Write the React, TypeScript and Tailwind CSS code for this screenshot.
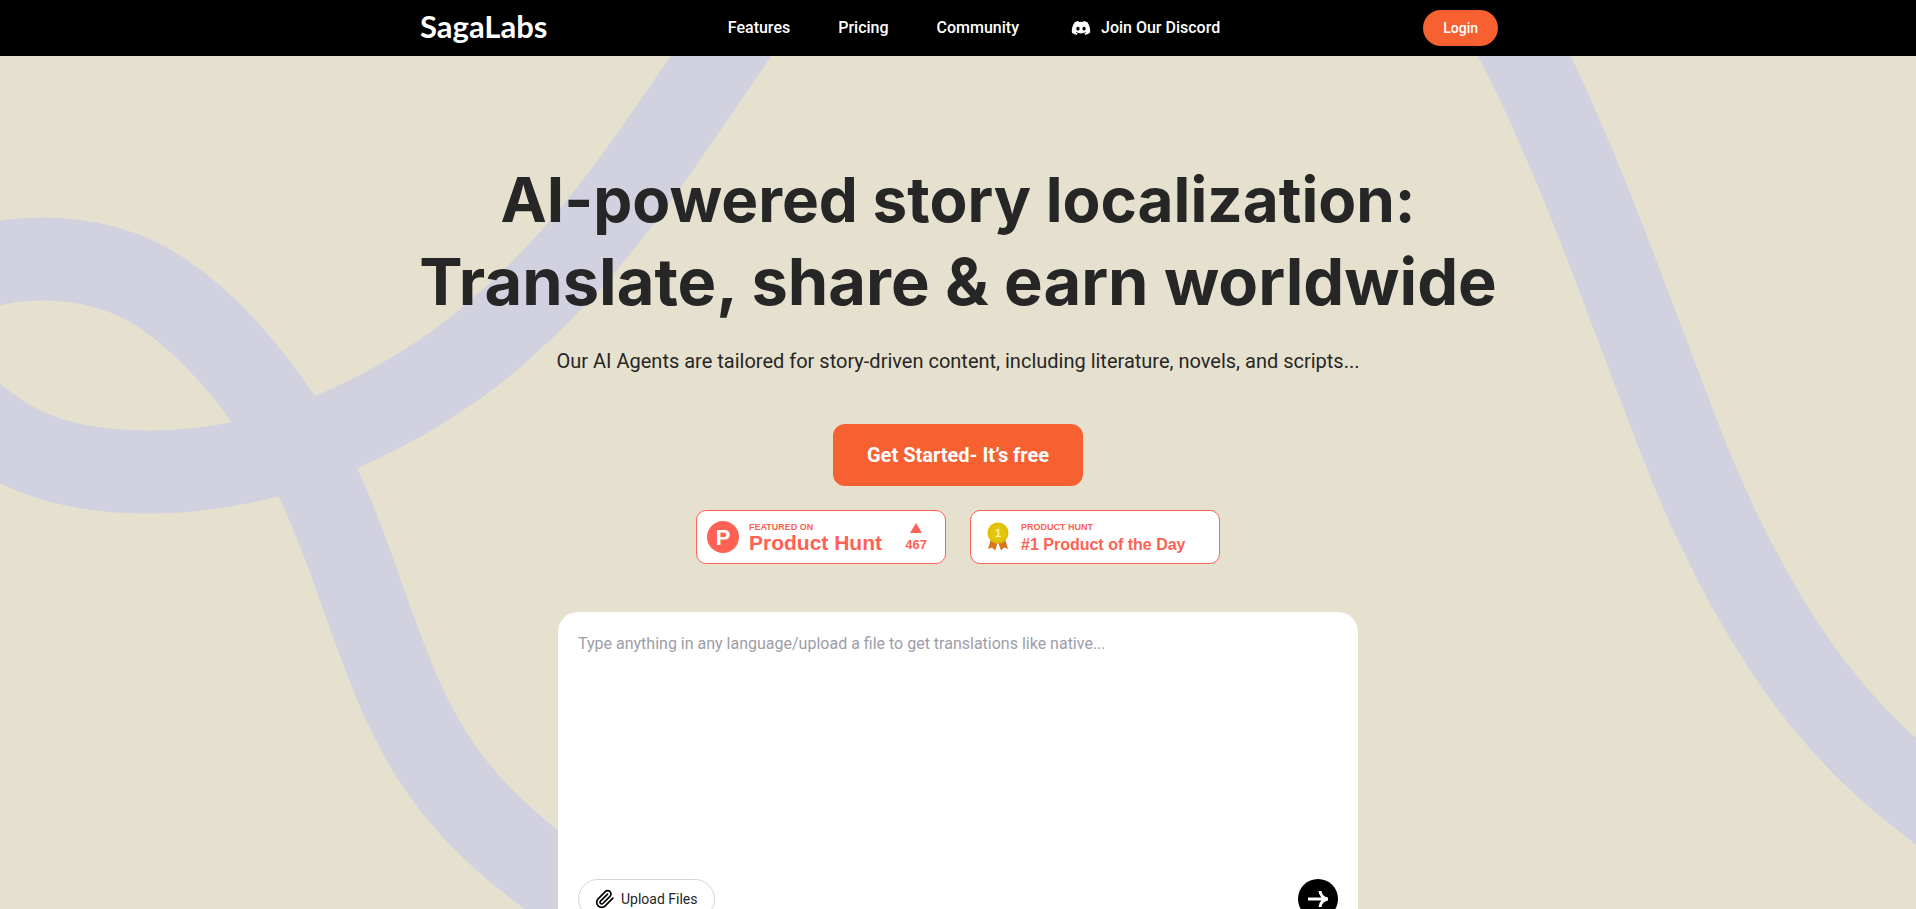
import React, { useState } from "react";
import { FaDiscord } from "react-icons/fa";

interface NavLink {
  label: string;
  href: string;
}

const navLinks: NavLink[] = [
  { label: "Features", href: "#features" },
  { label: "Pricing", href: "#pricing" },
  { label: "Community", href: "#community" },
];

const Header: React.FC = () => {
  return (
    <header className="relative bg-black text-white">
      <div className="mx-auto grid h-14 max-w-[1080px] grid-cols-[1fr_auto_1fr] items-center">
        <a
          href="#home"
          className="pb-1 pl-0.5 font-['Lato',sans-serif] text-[31px] leading-8 font-bold"
        >
          SagaLabs
        </a>
        <nav className="flex items-center gap-12 pl-8 font-medium">
          {navLinks.map((link) => (
            <a key={link.label} href={link.href}>
              {link.label}
            </a>
          ))}
          <a href="#discord" className="flex items-center gap-2.5 pl-1">
            <FaDiscord className="h-5 w-5" />
            Join Our Discord
          </a>
        </nav>
        <button
          type="button"
          className="h-9 justify-self-end rounded-full bg-[#f76030] px-5 text-sm font-medium"
        >
          Login
        </button>
      </div>
    </header>
  );
};

const Ribbons: React.FC = () => {
  return (
    <svg
      className="absolute inset-x-0 top-0 w-full"
      viewBox="0 0 1916 909"
      fill="none"
      stroke="#d2d1e0"
      strokeWidth="83"
      aria-hidden="true"
    >
      <path d="M760 0L721 56C681 114 641 175 596 230C564 270 527 307 488 340C443 378 391 408 337 432C279 458 212 472 148 472C95 472 42 463 0 435C-100 368 -120 283 0 263C14 260 28 259 42 259C84 259 126 269 162 293C206 323 242 364 272 407C289 431 305 456 318 483C341 530 356 580 374 628C392 678 411 726 441 769C466 805 497 835 530 861L640 946" />
      <path d="M1495 0L1525 57C1544 94 1560 132 1576 170C1603 234 1627 301 1652 366C1673 421 1693 477 1719 530C1738 570 1759 608 1783 645C1819 700 1864 751 1916 792L1990 850" />
    </svg>
  );
};

const Medal: React.FC = () => {
  return (
    <svg className="h-[30px] w-[22px]" viewBox="0 0 22 30" aria-hidden="true">
      <path d="M4 17L1 27L5 25.500L8 28.500L11 20Z" fill="#d9761d" />
      <path d="M18 17L21 27L17 25.500L14 28.500L11 20Z" fill="#d9761d" />
      <circle cx="11" cy="11" r="10.500" fill="#dfc000" />
      <circle cx="11" cy="11" r="8" fill="#e2c60f" />
      <text
        x="11"
        y="15"
        textAnchor="middle"
        fontSize="11"
        fontWeight="700"
        fill="#fff3a6"
        fontFamily="Liberation Sans, sans-serif"
      >
        1
      </text>
    </svg>
  );
};

const Badges: React.FC = () => {
  return (
    <div className="mt-6 flex flex-wrap justify-center gap-6 font-['Liberation_Sans',sans-serif] font-bold text-[#ff6154]">
      <a
        href="#product-hunt"
        className="flex h-[54px] w-[250px] items-center rounded-[10px] border border-[#ff6154] bg-white pr-[18px] pl-2.5"
      >
        <span className="flex h-8 w-8 items-center justify-center rounded-full bg-[#ff6154] text-[22px] text-white">
          P
        </span>
        <span className="ml-2.5 flex flex-col">
          <span className="text-[9px] leading-3">FEATURED ON</span>
          <span className="text-[21px] leading-5">Product Hunt</span>
        </span>
        <span className="ml-auto flex flex-col items-center gap-0.5 pt-1">
          <svg className="h-2.5 w-3" viewBox="0 0 12 10" aria-hidden="true">
            <path d="M6 0L12 10H0Z" fill="currentColor" />
          </svg>
          <span className="text-[13px] leading-5">467</span>
        </span>
      </a>
      <a
        href="#product-of-the-day"
        className="flex h-[54px] w-[250px] items-center rounded-[10px] border border-[#ff6154] bg-white px-4"
      >
        <Medal />
        <span className="ml-3 flex flex-col pt-1">
          <span className="text-[9px] leading-3">PRODUCT HUNT</span>
          <span className="text-base leading-6">#1 Product of the Day</span>
        </span>
      </a>
    </div>
  );
};

const TranslateBox: React.FC = () => {
  const [text, setText] = useState<string>("");

  return (
    <form
      className="mt-12 w-full max-w-[800px] rounded-[20px] bg-white p-5"
      onSubmit={(e) => e.preventDefault()}
    >
      <textarea
        aria-label="Text to translate"
        placeholder="Type anything in any language/upload a file to get translations like native..."
        className="block h-[239px] w-full resize-none text-base text-[#262626] outline-none placeholder:text-[#9d9da8]"
        value={text}
        onChange={(e) => setText(e.target.value)}
      />
      <div className="mt-2 flex items-center justify-between">
        <button
          type="button"
          className="flex h-10 items-center gap-1.5 rounded-full border border-gray-300 px-4 text-sm text-[#262626]"
        >
          <svg
            className="h-5 w-5"
            viewBox="0 0 24 24"
            fill="none"
            stroke="#000"
            strokeWidth="2"
            strokeLinecap="round"
            strokeLinejoin="round"
            aria-hidden="true"
          >
            <path d="M21.440 11.050l-9.190 9.190a6 6 0 0 1-8.490-8.490l8.570-8.570A4 4 0 1 1 18 8.840l-8.590 8.570a2 2 0 0 1-2.830-2.830l8.490-8.480" />
          </svg>
          Upload Files
        </button>
        <button
          type="submit"
          aria-label="Translate"
          className="flex h-10 w-10 items-center justify-center rounded-full bg-black"
        >
          <svg
            className="h-5 w-5"
            viewBox="0 0 20 20"
            fill="none"
            stroke="#fff"
            strokeWidth="3"
            aria-hidden="true"
          >
            <path d="M0 10H18M12 2Q12.500 8.500 20 10Q12.500 11.500 12 18" />
          </svg>
        </button>
      </div>
    </form>
  );
};

const App: React.FC = () => {
  return (
    <div className="relative min-h-screen overflow-hidden bg-[#e6e1ce] font-['Roboto',sans-serif] text-[#262626]">
      <Ribbons />
      <Header />
      <main className="relative flex flex-col items-center px-4 pt-[103px] pb-20">
        <h1 className="text-center font-['Inter',sans-serif] text-[62px] leading-[82px] font-bold">
          AI-powered story localization:
          <span className="block text-[65px]">
            Translate, share &amp; earn worldwide
          </span>
        </h1>
        <p className="mt-6 text-center text-xl">
          Our AI Agents are tailored for story-driven content, including
          literature, novels, and scripts...
        </p>
        <button
          type="button"
          className="mt-[49px] h-[62px] w-[250px] rounded-xl bg-[#f76030] text-xl font-bold text-white"
        >
          Get Started- It’s free
        </button>
        <Badges />
        <TranslateBox />
      </main>
    </div>
  );
};

export default App;
